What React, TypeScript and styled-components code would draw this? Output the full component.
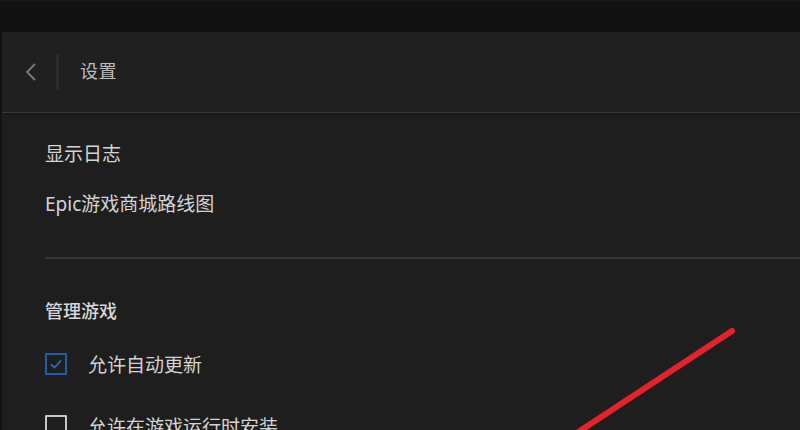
import React from "react";
import styled, { createGlobalStyle } from "styled-components";

const GlobalStyle = createGlobalStyle`
    html, body {
        margin: 0;
        padding: 0;
        background: #121212;
    }
    body {
        font-family: "Noto Sans", "Noto Sans CJK SC", sans-serif;
    }
`;

export default function App() {
    return (
        <>
            <GlobalStyle />
            <Page>
                <TopStrip />
                <Panel>
                    <SettingsHeader />
                    <Content>
                        <LinkRow>显示日志</LinkRow>
                        <LinkRow>Epic游戏商城路线图</LinkRow>
                        <Divider />
                        <SectionTitle>管理游戏</SectionTitle>
                        <CheckRow label="允许自动更新" checked={true} />
                        <CheckRow label="允许在游戏运行时安装" checked={false} />
                    </Content>
                </Panel>
                <Annotation width="800" height="430" viewBox="0 0 800 430">
                    <line
                        x1="732"
                        y1="331"
                        x2="560"
                        y2="444"
                        stroke="#e3222b"
                        strokeWidth="6"
                        strokeLinecap="round"
                    />
                </Annotation>
            </Page>
        </>
    );
}

function SettingsHeader() {
    return (
        <Header>
            <BackButton>
                <svg width="12" height="18" viewBox="0 0 12 18">
                    <path
                        d="M10 1 L2 9 L10 17"
                        fill="none"
                        stroke="#7a7a7a"
                        strokeWidth="1.8"
                    />
                </svg>
            </BackButton>
            <HeaderDivider />
            <HeaderTitle>设置</HeaderTitle>
        </Header>
    );
}

function CheckRow({ label, checked }: { label: string; checked: boolean }) {
    return (
        <CheckRowWrap>
            <Box $checked={checked}>
                {checked && (
                    <svg width="14" height="12" viewBox="0 0 14 12">
                        <path
                            d="M2 6.5 L5.5 9.5 L12 2.5"
                            fill="none"
                            stroke="#2f6db8"
                            strokeWidth="1.8"
                        />
                    </svg>
                )}
            </Box>
            <CheckLabel>{label}</CheckLabel>
        </CheckRowWrap>
    );
}

const Page = styled.div`
    position: relative;
    width: 800px;
    height: 430px;
    overflow: hidden;
    background: #121212;
    display: flex;
    flex-direction: column;
`;

const TopStrip = styled.div`
    height: 32px;
    flex-shrink: 0;
    background: #121212;
    border-top: 1px solid #1a1a1a;
    box-sizing: border-box;
`;

const Panel = styled.div`
    flex: 1;
    margin-left: 2px;
    background: #1e1e1e;
    display: flex;
    flex-direction: column;
`;

// 상단 헤더
const Header = styled.div`
    height: 81px;
    flex-shrink: 0;
    box-sizing: border-box;
    padding-bottom: 1px;
    background: #202020;
    border-bottom: 1px solid #3a3a3a;
    box-shadow: 0 2px 2px #161616;
    display: flex;
    align-items: center;
    padding-left: 22px;
`;

const BackButton = styled.div`
    width: 14px;
    height: 18px;
    display: flex;
    align-items: center;
    justify-content: center;
`;

const HeaderDivider = styled.div`
    width: 3px;
    height: 36px;
    background: #2c2c2c;
    margin-left: 18px;
    margin-right: 21px;
`;

const HeaderTitle = styled.div`
    font-size: 18px;
    color: #bdbdbd;
    letter-spacing: 0.5px;
    margin-bottom: 3px;
`;

// 내용
const Content = styled.div`
    padding: 15px 0 0 43px;
    display: flex;
    flex-direction: column;
`;

const LinkRow = styled.div`
    height: 50px;
    display: flex;
    align-items: center;
    font-size: 19px;
    color: #d4d4d4;
`;

const Divider = styled.div`
    height: 2px;
    background: #353535;
    margin-top: 29px;
    margin-bottom: 28px;
`;

const SectionTitle = styled.div`
    height: 46px;
    display: flex;
    align-items: center;
    font-size: 18px;
    font-weight: 500;
    color: #d8d8d8;
`;

const CheckRowWrap = styled.div`
    height: 62px;
    flex-shrink: 0;
    display: flex;
    align-items: center;
`;

const Box = styled.div<{ $checked: boolean }>`
    width: 22px;
    height: 22px;
    box-sizing: border-box;
    border: 2px solid ${(p) => (p.$checked ? "#1f5ca8" : "#c8c8c8")};
    border-radius: 1px;
    display: flex;
    align-items: center;
    justify-content: center;
`;

const CheckLabel = styled.div`
    margin-left: 21px;
    font-size: 19px;
    color: #d4d4d4;
`;

// 빨간 표시선
const Annotation = styled.svg`
    position: absolute;
    left: 0;
    top: 0;
    pointer-events: none;
`;
